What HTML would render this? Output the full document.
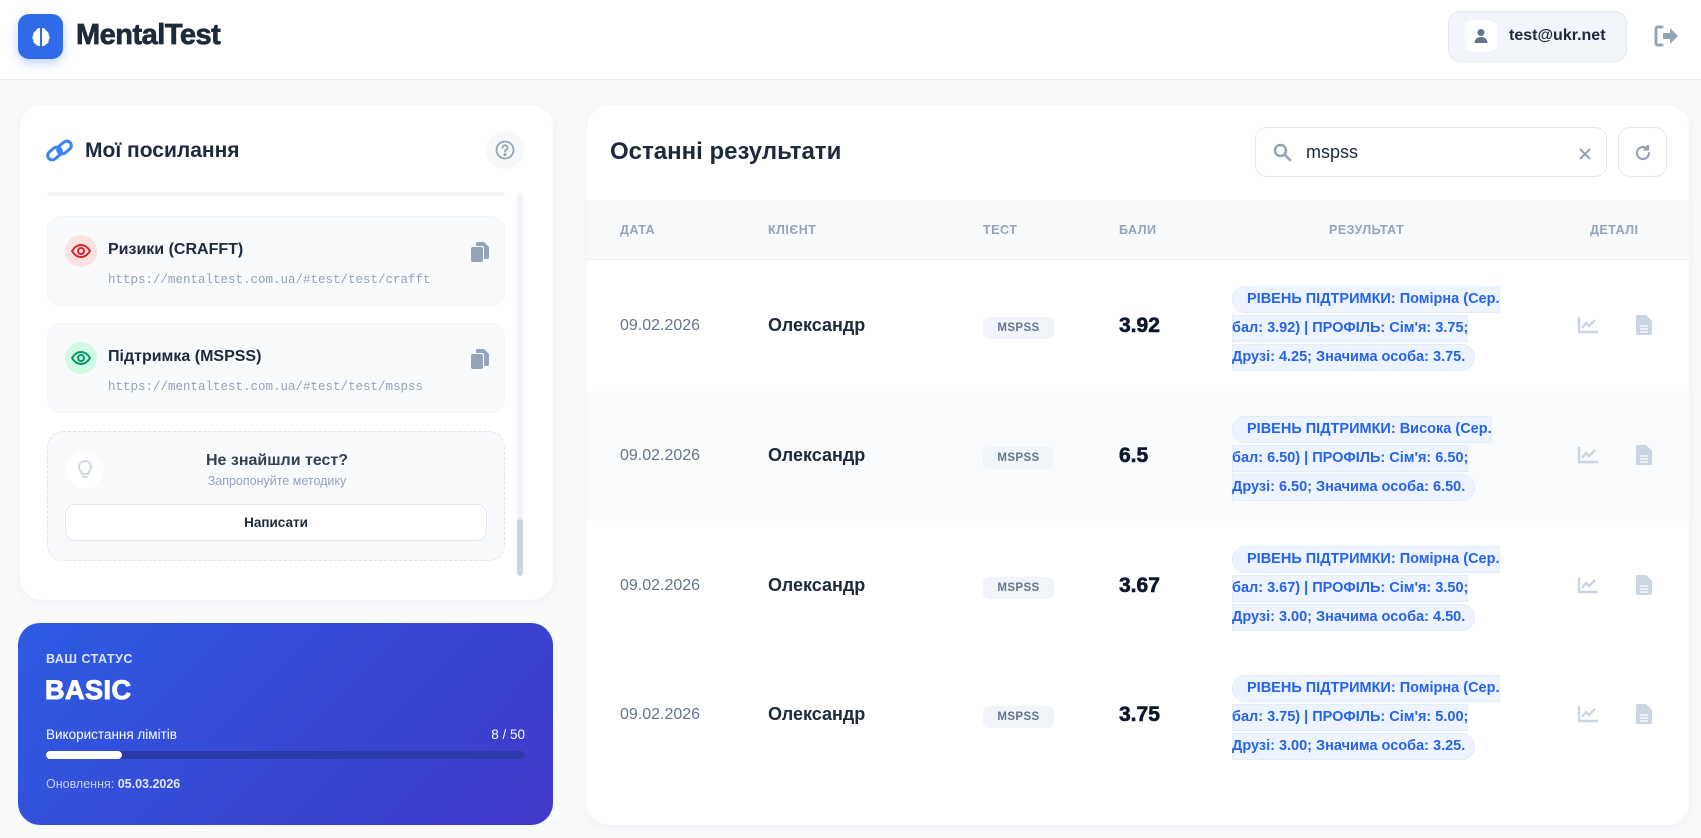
<!DOCTYPE html>
<html><head><meta charset="utf-8"><style>
*{box-sizing:border-box;margin:0;padding:0}
body{width:1701px;height:838px;overflow:hidden;background:#f8fafc;font-family:"Liberation Sans","Noto Sans CJK SC",sans-serif;color:#1e293b;position:relative}
.abs{position:absolute}
header{position:absolute;left:0;top:0;width:1701px;height:80px;background:#fff;border-bottom:1px solid #e8ecf1}
.card{position:absolute;background:#fff;border-radius:22px;box-shadow:0 2px 10px rgba(15,23,42,.04)}
.item{position:absolute;left:47px;width:458px;height:90px;background:#f8fafc;border:1px solid #f1f4f8;border-radius:14px}
.ic{position:absolute;left:17px;top:18px;width:32px;height:32px;border-radius:50%;display:flex;align-items:center;justify-content:center}
.it{position:absolute;left:60px;top:24px;font-size:16px;font-weight:bold;color:#1e293b}
.iu{position:absolute;left:60px;top:56px;font-family:"Liberation Mono",monospace;font-size:12.5px;color:#94a3b8}
.cp{position:absolute;right:14px;top:24px}
.th{position:absolute;top:223px;font-size:12.5px;font-weight:bold;color:#94a3b8;letter-spacing:.5px}
.row{position:absolute;left:587px;width:1102px;height:130px}
.row .d{position:absolute;left:33px;top:56px;font-size:16px;color:#64748b}
.row .n{position:absolute;left:181px;top:54px;font-size:18px;font-weight:bold;color:#1e293b}
.row .b{position:absolute;left:396px;top:56px;width:71px;height:22px;background:#f1f5f9;border-radius:6px;font-size:11.5px;font-weight:bold;color:#64748b;text-align:center;line-height:22px;letter-spacing:.4px}
.row .s{position:absolute;left:532px;top:53px;font-size:21px;font-weight:bold;color:#0f172a;-webkit-text-stroke:.6px #0f172a}
.row .r{position:absolute;left:645px;top:24px;width:300px;white-space:nowrap;line-height:29px;font-size:14.5px;font-weight:bold;color:#2563eb}
.row .r span{background:#eef4ff;padding:5px 10px 6px 15px;border-radius:15px;box-shadow:0 0 0 1px #e3ecfb inset}
.row .ch{position:absolute;left:990px;top:55px}
.row .dc{position:absolute;left:1049px;top:54px}
</style></head><body>
<header>
 <div class="abs" style="left:18px;top:14px;width:45px;height:45px;border-radius:11px;background:#2f6ae8;box-shadow:0 4px 10px rgba(47,106,232,.3);display:flex;align-items:center;justify-content:center">
  <svg width="24" height="24" viewBox="0 0 24 24" fill="#fff"><path d="M11 3C8 3 7 5 7 6 5 6 4 8 4.5 10 3 11 3 14 4.5 15 4 17 5 19 7 19 7.5 21 9.5 21.5 11 21Z"/><path d="M13 3C16 3 17 5 17 6 19 6 20 8 19.5 10 21 11 21 14 19.5 15 20 17 19 19 17 19 16.5 21 14.5 21.5 13 21Z"/></svg>
 </div>
 <div class="abs" style="left:76px;top:19px;font-size:29px;font-weight:bold;color:#1e293b;letter-spacing:-.5px;-webkit-text-stroke:.7px #1e293b">MentalTest</div>
 <div class="abs" style="left:1448px;top:11px;width:179px;height:51px;background:#f1f5f9;border:1px solid #e5e9ef;border-radius:12px">
  <div class="abs" style="left:16px;top:8px;width:32px;height:32px;background:#fff;border-radius:8px;display:flex;align-items:center;justify-content:center">
   <svg width="16" height="16" viewBox="0 0 16 16" fill="#64748b"><circle cx="8" cy="4.5" r="3.5"/><path d="M1.5 15c0-4 3-6 6.5-6s6.5 2 6.5 6z"/></svg>
  </div>
  <div class="abs" style="left:60px;top:15px;font-size:16px;font-weight:bold;color:#1e293b">test@ukr.net</div>
 </div>
 <svg class="abs" style="left:1653px;top:24px" width="26" height="24" viewBox="0 0 26 24"><path d="M9 3H5a2 2 0 0 0-2 2v14a2 2 0 0 0 2 2h4" fill="none" stroke="#94a3b8" stroke-width="3" stroke-linecap="round"/><path d="M10 9h7V4l8 8-8 8v-5h-7z" fill="#94a3b8"/></svg>
</header>

<div class="card" style="left:20px;top:105px;width:533px;height:495px">
 <svg class="abs" style="left:25px;top:33px" width="30" height="26" viewBox="0 0 30 26" fill="none" stroke="#3b82f6" stroke-width="3" stroke-linecap="round"><rect x="2" y="11" width="15" height="9" rx="4.5" transform="rotate(-40 9.5 15.5)"/><rect x="12" y="5" width="15" height="9" rx="4.5" transform="rotate(-40 19.5 9.5)"/></svg>
 <div class="abs" style="left:65px;top:34px;font-size:21px;font-weight:bold;color:#1e293b">Мої посилання</div>
 <div class="abs" style="left:466px;top:26px;width:38px;height:38px;border-radius:50%;background:#f6f8fa;display:flex;align-items:center;justify-content:center">
  <svg width="20" height="20" viewBox="0 0 20 20" fill="none" stroke="#94a3b8" stroke-width="1.8"><circle cx="10" cy="10" r="8.5"/><path d="M7.5 7.8a2.5 2.5 0 1 1 3.3 2.3c-.6.3-.8.7-.8 1.4" stroke-linecap="round"/><circle cx="10" cy="14.5" r=".6" fill="#94a3b8"/></svg>
 </div>
 <div class="abs" style="left:27px;top:87px;width:458px;height:4px;background:#f4f6f9;border-radius:2px"></div>
 <div class="abs" style="left:497px;top:88px;width:6px;height:383px;background:#f1f5f9;border-radius:3px"></div>
 <div class="abs" style="left:497px;top:414px;width:6px;height:57px;background:#cbd5e1;border-radius:3px"></div>
</div>
<div class="item" style="top:216px">
 <div class="ic" style="background:#fde2e2"><svg width="20" height="14" viewBox="0 0 20 14" fill="none" stroke="#dc2626" stroke-width="2"><path d="M1 7c2.5-4 5.5-6 9-6s6.5 2 9 6c-2.5 4-5.5 6-9 6s-6.5-2-9-6z"/><circle cx="10" cy="7" r="3"/></svg></div>
 <div class="it">Ризики (CRAFFT)</div>
 <div class="iu">https://mentaltest.com.ua/#test/test/crafft</div>
 <svg class="cp" width="20" height="22" viewBox="0 0 20 22" fill="#94a3b8"><rect x="1" y="6" width="12" height="15" rx="2"/><path d="M7 1h7l5 5v10a2 2 0 0 1-2 2h-3V7a2 2 0 0 0-2-2H6V2z"/></svg>
</div>
<div class="item" style="top:323px">
 <div class="ic" style="background:#d1fae5"><svg width="20" height="14" viewBox="0 0 20 14" fill="none" stroke="#059669" stroke-width="2"><path d="M1 7c2.5-4 5.5-6 9-6s6.5 2 9 6c-2.5 4-5.5 6-9 6s-6.5-2-9-6z"/><circle cx="10" cy="7" r="3"/></svg></div>
 <div class="it">Підтримка (MSPSS)</div>
 <div class="iu">https://mentaltest.com.ua/#test/test/mspss</div>
 <svg class="cp" width="20" height="22" viewBox="0 0 20 22" fill="#94a3b8"><rect x="1" y="6" width="12" height="15" rx="2"/><path d="M7 1h7l5 5v10a2 2 0 0 1-2 2h-3V7a2 2 0 0 0-2-2H6V2z"/></svg>
</div>
<div class="abs" style="left:47px;top:431px;width:458px;height:130px;border:1.5px dashed #dfe4ea;border-radius:16px;background:#f9fafc">
 <div class="abs" style="left:18px;top:19px;width:38px;height:38px;border-radius:50%;background:#fff;display:flex;align-items:center;justify-content:center">
  <svg width="14" height="20" viewBox="0 0 14 20" fill="none" stroke="#cbd5e1" stroke-width="1.8"><path d="M7 1a6 6 0 0 0-3.5 10.9V14h7v-2.1A6 6 0 0 0 7 1z"/><path d="M4.5 17h5"/></svg>
 </div>
 <div class="abs" style="left:0;width:458px;top:20px;text-align:center;font-size:16px;font-weight:bold;color:#334155">Не знайшли тест?</div>
 <div class="abs" style="left:0;width:458px;top:42px;text-align:center;font-size:12.5px;color:#94a3b8">Запропонуйте методику</div>
 <div class="abs" style="left:17px;top:72px;width:422px;height:37px;background:#fff;border:1px solid #e2e8f0;border-radius:10px;text-align:center;line-height:35px;font-size:13.5px;font-weight:bold;color:#1e293b">Написати</div>
</div>

<div class="abs" style="left:18px;top:623px;width:535px;height:202px;border-radius:22px;background:linear-gradient(135deg,#2d5be3 0%,#3846d3 60%,#4338ca 100%)">
 <div class="abs" style="left:28px;top:29px;font-size:12.5px;font-weight:bold;color:#dbe4ff;letter-spacing:.5px">ВАШ СТАТУС</div>
 <div class="abs" style="left:27px;top:52px;font-size:27px;font-weight:bold;color:#fff;letter-spacing:.5px;-webkit-text-stroke:1px #fff">BASIC</div>
 <div class="abs" style="left:28px;top:104px;font-size:13.5px;color:#fff">Використання лімітів</div>
 <div class="abs" style="right:28px;top:104px;font-size:13.5px;color:#fff">8 / 50</div>
 <div class="abs" style="left:28px;top:128px;width:479px;height:8px;border-radius:4px;background:#2c3aa8"></div>
 <div class="abs" style="left:28px;top:128px;width:76px;height:8px;border-radius:4px;background:#fff"></div>
 <div class="abs" style="left:28px;top:154px;font-size:12.5px;color:#c7d2fe">Оновлення: <b style="color:#e0e7ff">05.03.2026</b></div>
</div>

<div class="card" style="left:587px;top:105px;width:1102px;height:720px;overflow:hidden">
 <div class="abs" style="left:23px;top:33px;font-size:24px;font-weight:bold;color:#1e293b">Останні результати</div>
 <div class="abs" style="left:668px;top:22px;width:352px;height:50px;border:1px solid #e2e8f0;border-radius:12px;background:#fff">
  <svg class="abs" style="left:17px;top:15px" width="19" height="19" viewBox="0 0 19 19" fill="none" stroke="#94a3b8" stroke-width="2.5"><circle cx="7.5" cy="7.5" r="5.5"/><path d="M12 12l5 5" stroke-linecap="round"/></svg>
  <div class="abs" style="left:50px;top:14px;font-size:18px;color:#1e293b">mspss</div>
  <svg class="abs" style="left:323px;top:20px" width="12" height="12" viewBox="0 0 12 12" stroke="#94a3b8" stroke-width="2"><path d="M1 1l10 10M11 1L1 11"/></svg>
 </div>
 <div class="abs" style="left:1031px;top:22px;width:49px;height:50px;border:1px solid #e2e8f0;border-radius:12px;background:#fff">
  <svg class="abs" style="left:15px;top:16px" width="18" height="18" viewBox="0 0 18 18" fill="none" stroke="#94a3b8" stroke-width="2.2"><path d="M15 9a6 6 0 1 1-2-4.5" stroke-linecap="round"/><path d="M14 1v4.5h-4.5" fill="#94a3b8" stroke-linejoin="round"/></svg>
 </div>
 <div class="abs" style="left:0;top:95px;width:1102px;height:60px;background:#f8fafc;border-bottom:1px solid #eef2f6"></div>
</div>
<div class="th" style="left:620px">ДАТА</div>
<div class="th" style="left:768px">КЛІЄНТ</div>
<div class="th" style="left:983px">ТЕСТ</div>
<div class="th" style="left:1119px">БАЛИ</div>
<div class="th" style="left:1329px">РЕЗУЛЬТАТ</div>
<div class="th" style="left:1590px">ДЕТАЛІ</div>

<div class="row" style="top:261px">
 <div class="d">09.02.2026</div><div class="n">Олександр</div><div class="b">MSPSS</div><div class="s">3.92</div>
 <div class="r"><span>РІВЕНЬ ПІДТРИМКИ: Помірна (Сер.<br>бал: 3.92) | ПРОФІЛЬ: Сім'я: 3.75;<br>Друзі: 4.25; Значима особа: 3.75.</span></div>
 <svg class="ch" width="22" height="18" viewBox="0 0 22 18" fill="none" stroke="#cbd5e1" stroke-width="2.4"><path d="M2 1v15h19"/><path d="M5 12l4-5 3 3 6-6"/></svg>
 <svg class="dc" width="16" height="20" viewBox="0 0 16 20" fill="#cbd5e1"><path d="M2 0h8l6 6v12a2 2 0 0 1-2 2H2a2 2 0 0 1-2-2V2a2 2 0 0 1 2-2z"/><path d="M4 11h8M4 14h8M4 17h8" stroke="#fff" stroke-width="1.3"/></svg>
</div>
<div class="row" style="top:391px;background:#f9fbfd">
 <div class="d">09.02.2026</div><div class="n">Олександр</div><div class="b">MSPSS</div><div class="s">6.5</div>
 <div class="r"><span>РІВЕНЬ ПІДТРИМКИ: Висока (Сер.<br>бал: 6.50) | ПРОФІЛЬ: Сім'я: 6.50;<br>Друзі: 6.50; Значима особа: 6.50.</span></div>
 <svg class="ch" width="22" height="18" viewBox="0 0 22 18" fill="none" stroke="#cbd5e1" stroke-width="2.4"><path d="M2 1v15h19"/><path d="M5 12l4-5 3 3 6-6"/></svg>
 <svg class="dc" width="16" height="20" viewBox="0 0 16 20" fill="#cbd5e1"><path d="M2 0h8l6 6v12a2 2 0 0 1-2 2H2a2 2 0 0 1-2-2V2a2 2 0 0 1 2-2z"/><path d="M4 11h8M4 14h8M4 17h8" stroke="#fff" stroke-width="1.3"/></svg>
</div>
<div class="row" style="top:521px">
 <div class="d">09.02.2026</div><div class="n">Олександр</div><div class="b">MSPSS</div><div class="s">3.67</div>
 <div class="r"><span>РІВЕНЬ ПІДТРИМКИ: Помірна (Сер.<br>бал: 3.67) | ПРОФІЛЬ: Сім'я: 3.50;<br>Друзі: 3.00; Значима особа: 4.50.</span></div>
 <svg class="ch" width="22" height="18" viewBox="0 0 22 18" fill="none" stroke="#cbd5e1" stroke-width="2.4"><path d="M2 1v15h19"/><path d="M5 12l4-5 3 3 6-6"/></svg>
 <svg class="dc" width="16" height="20" viewBox="0 0 16 20" fill="#cbd5e1"><path d="M2 0h8l6 6v12a2 2 0 0 1-2 2H2a2 2 0 0 1-2-2V2a2 2 0 0 1 2-2z"/><path d="M4 11h8M4 14h8M4 17h8" stroke="#fff" stroke-width="1.3"/></svg>
</div>
<div class="row" style="top:650px">
 <div class="d">09.02.2026</div><div class="n">Олександр</div><div class="b">MSPSS</div><div class="s">3.75</div>
 <div class="r"><span>РІВЕНЬ ПІДТРИМКИ: Помірна (Сер.<br>бал: 3.75) | ПРОФІЛЬ: Сім'я: 5.00;<br>Друзі: 3.00; Значима особа: 3.25.</span></div>
 <svg class="ch" width="22" height="18" viewBox="0 0 22 18" fill="none" stroke="#cbd5e1" stroke-width="2.4"><path d="M2 1v15h19"/><path d="M5 12l4-5 3 3 6-6"/></svg>
 <svg class="dc" width="16" height="20" viewBox="0 0 16 20" fill="#cbd5e1"><path d="M2 0h8l6 6v12a2 2 0 0 1-2 2H2a2 2 0 0 1-2-2V2a2 2 0 0 1 2-2z"/><path d="M4 11h8M4 14h8M4 17h8" stroke="#fff" stroke-width="1.3"/></svg>
</div>
</body></html>
